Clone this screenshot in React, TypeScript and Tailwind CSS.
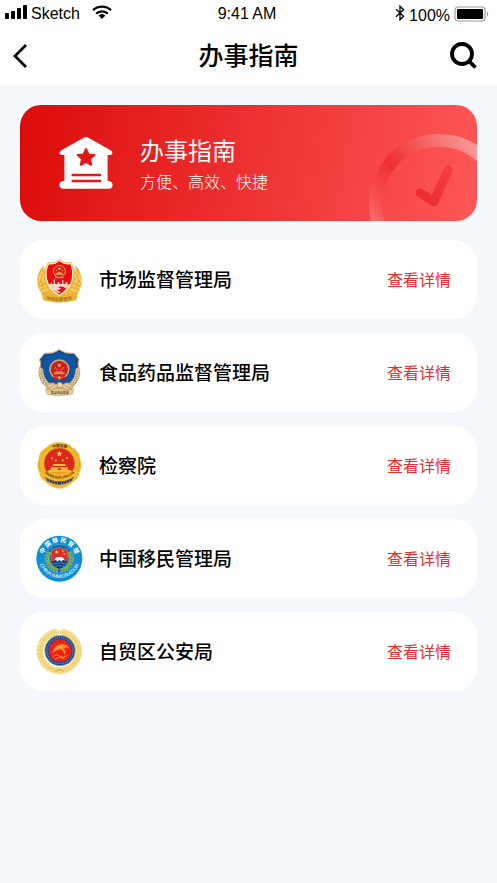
import type { ReactNode } from "react";

const STAR =
  "M0 -10 L2.9 -3.5 L9.8 -3 L4.6 1.7 L6.2 8.6 L0 5 L-6.2 8.6 L-4.6 1.7 L-9.8 -3 L-2.9 -3.5 Z";

function Star({ x, y, s, fill }: { x: number; y: number; s: number; fill: string }) {
  return <path d={STAR} fill={fill} transform={`translate(${x} ${y}) scale(${s})`} />;
}

type WreathProps = {
  cx: number;
  cy: number;
  r: number;
  from: number;
  to: number;
  count: number;
  rx: number;
  ry: number;
  fill: string;
  stroke: string;
};

/* Mirrored leaves on both sides of a circle; angles in degrees, 0 at the bottom. */
function Wreath({ cx, cy, r, from, to, count, rx, ry, fill, stroke }: WreathProps) {
  const leaves: ReactNode[] = [];
  for (let i = 0; i < count; i++) {
    const deg = from + ((to - from) * i) / (count - 1);
    const a = (deg * Math.PI) / 180;
    for (const side of [-1, 1]) {
      for (const tilt of [-28, 28]) {
        const rr = r + (tilt > 0 ? ry : -ry);
        const x = cx + side * Math.sin(a) * rr;
        const y = cy + Math.cos(a) * rr;
        leaves.push(
          <ellipse
            key={`${i}${side}${tilt}`}
            rx={rx}
            ry={ry}
            fill={fill}
            stroke={stroke}
            strokeWidth="1"
            transform={`translate(${x} ${y}) rotate(${-side * (deg + tilt)})`}
          />,
        );
      }
    }
  }
  return <g>{leaves}</g>;
}

function NationalCrest({ x, y, r }: { x: number; y: number; r: number }) {
  const k = r / 24;
  return (
    <g transform={`translate(${x} ${y}) scale(${k})`}>
      <circle r="25" fill="#c9201f" stroke="#dba878" strokeWidth="4" />
      <Star x={0} y={-11} s={0.6} fill="#f0b860" />
      <Star x={-11} y={-4} s={0.25} fill="#f0b860" />
      <Star x={11} y={-4} s={0.25} fill="#f0b860" />
      <Star x={-6} y={0} s={0.25} fill="#f0b860" />
      <Star x={6} y={0} s={0.25} fill="#f0b860" />
      <path d="M-14 13 V8 H-9 V5 H9 V8 H14 V13 Z" fill="#de8a4c" />
      <path d="M-16 18 L-8 23 H8 L16 18 L14 30 L4 27 H-4 L-14 30 Z" fill="#c81a1c" />
      <circle cy="22" r="4" fill="#e0a460" />
    </g>
  );
}

function MarketEmblem() {
  return (
    <svg viewBox="18 18 144 144" className="size-12 shrink-0" aria-hidden="true">
      <path d="M42 48 C18 62 16 108 34 128 L40 146 Q88 168 138 146 L144 128 C160 108 158 62 136 48 L122 110 L88 136 L56 110 Z" fill="#f0b73a" />
      <g stroke="#fbe08a" strokeWidth="3" strokeLinecap="round" fill="none">
        <path d="M42 54 L34 72 M36 66 L28 84 M33 80 L25 94 M44 72 L36 92 M44 92 L28 104 M48 108 L31 114 M54 118 L36 124" />
        <path d="M136 54 L144 72 M142 66 L150 84 M145 80 L153 94 M134 72 L142 92 M134 92 L150 104 M130 108 L147 114 M124 118 L142 124" />
      </g>
      <g stroke="#d6902a" strokeWidth="1" fill="none">
        <path d="M38 56 L32 84 L40 116 M24 86 L38 100 M25 102 L42 116" />
        <path d="M140 56 L146 84 L138 116 M154 86 L140 100 M153 102 L136 116" />
      </g>
      <path d="M88 29 Q104 42 124 38 Q134 58 130 88 Q124 120 88 140 Q52 120 46 88 Q42 58 54 38 Q74 42 88 29 Z" fill="#fff3c0" stroke="#d8a23b" strokeWidth="2" />
      <path d="M88 34 Q104 46 121 43 Q129 60 125 86 Q120 112 88 134 Q56 112 51 86 Q47 60 57 43 Q74 46 88 34 Z" fill="#ed0a10" />
      <circle cx="88" cy="64" r="18" fill="#e31a18" stroke="#ec9c5f" strokeWidth="3" />
      <Star x={88} y={56} s={0.5} fill="#fbd66e" />
      <Star x={79} y={62} s={0.25} fill="#fbd66e" />
      <Star x={97} y={62} s={0.25} fill="#fbd66e" />
      <path d="M76 74 V70 H82 V67 H94 V70 H100 V74 Z M76 80 Q88 87 100 80 V85 H76 Z" fill="#efa963" />
      <path d="M57 104 L62 101 V98 H66 V102 H71 V90 L73 86 L75 90 V102 H83 V96 H88 V102 H96 V91 H100 V102 H106 V97 H112 V102 L118 104 L108 116 Q98 106 84 112 L94 117 L80 120 L92 126 L88 130 Q66 120 57 104 Z" fill="#fbd9c8" />
      <path d="M36 126 Q88 152 142 126 L138 150 Q88 164 40 150 Z" fill="#eeb233" stroke="#d39a2b" strokeWidth="1" />
      <path id="marketBanner" d="M43 147 Q88 159 137 146" fill="none" />
      <text fontSize="13" fill="#855b13" className="font-['Noto_Sans_CJK_SC',sans-serif]">
        <textPath href="#marketBanner" startOffset="5">市场监督管理</textPath>
      </text>
    </svg>
  );
}

function FoodDrugEmblem() {
  return (
    <svg viewBox="18 18 144 144" className="size-12 shrink-0" aria-hidden="true">
      <path d="M88 20 Q108 34 132 31 L147 49 Q141 62 147 76 Q155 108 126 132 L88 150 L50 132 Q21 108 29 76 Q35 62 29 49 L44 31 Q68 34 88 20 Z" fill="#11549f" stroke="#cda86d" strokeWidth="3" />
      <path d="M88 26 Q108 38 130 36 L141 50 Q135 62 140 76 Q147 104 122 126 L88 142 L54 126 Q29 104 36 76 Q41 62 35 50 L46 36 Q68 38 88 26 Z" fill="none" stroke="#0b4384" strokeWidth="2" />
      <NationalCrest x={88} y={79} r={27} />
      <Wreath cx={88} cy={82} r={55} from={34} to={92} count={8} rx={7} ry={3} fill="#e8d3a8" stroke="#9c7b48" />
      <path d="M46 128 Q66 112 78 124 L88 116 L100 124 Q112 112 132 128 L124 144 H52 Z" fill="#cfae78" />
      <path d="M54 130 L70 124 M62 137 L80 128 M122 130 L106 124 M114 137 L98 128" stroke="#f5e6c5" strokeWidth="3" />
      <circle cx="90" cy="126" r="7" fill="#f2dfba" stroke="#a97f45" />
      <path d="M46 138 L56 141 Q88 133 120 141 L132 138 L128 153 L119 155 Q88 162 58 155 L50 153 Z" fill="#e3cba0" stroke="#a98450" strokeWidth="1" />
      <text x="89" y="152" fontSize="9" textAnchor="middle" fill="#5e411d" className="font-['Noto_Sans_CJK_SC',sans-serif] font-bold">食品药品监督</text>
    </svg>
  );
}

function ProcuratorateEmblem() {
  return (
    <svg viewBox="18 18 144 144" className="size-12 shrink-0" aria-hidden="true">
      <path d="M88 19 Q112 18 126 34 Q148 44 150 68 Q158 92 148 110 Q146 128 130 136 Q114 156 88 158 Q62 156 46 136 Q30 128 28 110 Q18 92 26 68 Q28 44 50 34 Q64 18 88 19 Z" fill="#f2b92c" />
      <path d="M30 68 Q24 92 34 108 M146 68 Q152 92 142 108 M36 62 Q46 38 66 30 M140 62 Q130 38 110 30" stroke="#d89a22" strokeWidth="2" fill="none" />
      <circle cx="88" cy="82" r="46" fill="#dc2620" stroke="#d9901e" strokeWidth="2" />
      <Star x={88} y={53} s={0.9} fill="#fbd23c" />
      <Star x={66} y={66} s={0.4} fill="#fbd23c" />
      <Star x={78} y={73} s={0.4} fill="#fbd23c" />
      <Star x={98} y={73} s={0.4} fill="#fbd23c" />
      <Star x={111} y={66} s={0.4} fill="#fbd23c" />
      <path d="M66 90 L72 84 H104 L110 90 Z M62 102 V94 H114 V102 Z M50 110 L56 102 H122 L128 110 Z" fill="#f5bc32" />
      <path d="M74 91 H102 V93 H74 Z M84 97 H92 V102 H84 Z" fill="#bb2a19" />
      <path d="M48 106 Q88 118 129 106 Q116 128 88 128 Q60 128 48 106 Z" fill="#f0b12b" />
      <path d="M44 122 Q88 150 132 122 L124 136 Q88 156 52 136 Z" fill="#29307e" />
      <path d="M50 124 V142 M58 126 V144 M66 129 V148 M74 131 V150 M82 132 V152 M94 132 V152 M102 131 V150 M110 129 V148 M118 126 V144 M126 124 V142" stroke="#e0a93a" strokeWidth="2" />
      <path id="procTop" d="M57 40 Q88 26 121 40" fill="none" />
      <path id="procBottom" d="M32 94 Q48 126 88 127 Q128 126 146 94" fill="none" />
      <g fill="#44320c" className="font-['Noto_Sans_CJK_SC',sans-serif] font-bold">
        <text fontSize="11">
          <textPath href="#procTop" startOffset="50%" textAnchor="middle">中国检察</textPath>
        </text>
        <text fontSize="9">
          <textPath href="#procBottom" startOffset="50%" textAnchor="middle">ZHONG GUO JIAN CHA</textPath>
        </text>
      </g>
    </svg>
  );
}

function ImmigrationEmblem() {
  return (
    <svg viewBox="18 18 144 144" className="size-12 shrink-0" aria-hidden="true">
      <circle cx="88" cy="89" r="69" fill="#0f8ed4" />
      <circle cx="88" cy="89" r="43" fill="#1565ad" stroke="#51b8e8" strokeWidth="2" />
      <Wreath cx={88} cy={89} r={35} from={12} to={118} count={9} rx={4} ry={3} fill="#5bab4b" stroke="#d4c84d" />
      <path d="M64 60 Q76 63 88 55 Q100 63 112 60 V88 Q112 108 88 120 Q64 108 64 88 Z" fill="#e12b2a" stroke="#f4cf7a" strokeWidth="1" />
      <Star x={80} y={69} s={0.6} fill="#ffe051" />
      <Star x={98} y={66} s={0.35} fill="#ffe051" />
      <Star x={103} y={75} s={0.35} fill="#ffe051" />
      <path d="M64 100 L80 85 H97 L112 100 Q106 114 88 120 Q70 114 64 100 Z" fill="#153d7a" />
      <path d="M70 95 L80 84 H97 L106 95 L98 92 L94 98 L88 92 L82 98 L78 92 Z" fill="#ffffff" />
      <path d="M66 105 Q88 98 110 105 M72 112 Q88 107 104 112" stroke="#4cb2e5" strokeWidth="2" fill="none" />
      <path id="immTop" d="M40 98 A49 49 0 1 1 136 98" fill="none" />
      <path id="immBottom" d="M27 96 A62 62 0 0 0 149 96" fill="none" />
      <g fill="#ffffff">
        <text fontSize="18" className="font-['Noto_Sans_CJK_SC',sans-serif] font-bold">
          <textPath href="#immTop" startOffset="50%" textAnchor="middle">中 国 移 民 管 理</textPath>
        </text>
        <text fontSize="15" className="font-['Liberation_Sans',sans-serif]">
          <textPath href="#immBottom" startOffset="50%" textAnchor="middle">CHINA IMMIGRATION</textPath>
        </text>
      </g>
    </svg>
  );
}

function FreeTradeEmblem() {
  return (
    <svg viewBox="18 18 144 144" className="size-12 shrink-0" aria-hidden="true">
      <Wreath cx={88} cy={88} r={58} from={6} to={170} count={17} rx={9} ry={4} fill="#fae08a" stroke="#e2b84e" />
      <circle cx="90" cy="86" r="46" fill="#164a95" stroke="#f1cf71" strokeWidth="2" />
      <circle cx="90" cy="86" r="39" fill="none" stroke="#6f90b8" strokeWidth="4" strokeDasharray="3 3" />
      <circle cx="90" cy="86" r="34" fill="#ee2019" />
      <path d="M66 94 Q72 68 96 66 Q112 66 116 78 Q108 74 102 80 Q110 88 104 98 Q100 86 92 82 Q78 84 66 94 Z" fill="#f58a2c" />
      <path d="M72 88 Q80 74 98 72" stroke="#ffd65e" strokeWidth="2" fill="none" />
      <path d="M68 104 Q80 94 90 103 Q100 110 112 100 M74 111 Q88 102 104 110" stroke="#f58f33" strokeWidth="3" fill="none" />
      <path d="M72 146 Q88 136 104 146 L98 150 Q88 144 78 150 Z" fill="#e9bb4e" />
    </svg>
  );
}

const departments = [
  { name: "市场监督管理局", emblem: <MarketEmblem /> },
  { name: "食品药品监督管理局", emblem: <FoodDrugEmblem /> },
  { name: "检察院", emblem: <ProcuratorateEmblem /> },
  { name: "中国移民管理局", emblem: <ImmigrationEmblem /> },
  { name: "自贸区公安局", emblem: <FreeTradeEmblem /> },
];

function StatusBar() {
  return (
    <div className="grid h-[26px] grid-cols-[1fr_auto_1fr] items-center pr-2 pl-[5px] font-['Liberation_Sans',Arial,sans-serif] text-base leading-6">
      <div className="flex items-center">
        <svg width="22" height="14" viewBox="0 0 22 14" className="-mt-1" aria-hidden="true">
          <rect x="0" y="8" width="4" height="6" rx="1" />
          <rect x="6" y="6" width="4" height="8" rx="1" />
          <rect x="12" y="3" width="4" height="11" rx="1" />
          <rect x="18" y="0" width="4" height="14" rx="1" />
        </svg>
        <span className="ml-1">Sketch</span>
        <svg width="20" height="14" viewBox="0 0 20 14" className="-mt-1 ml-3" aria-hidden="true">
          <g fill="none" stroke="#000" strokeWidth="2.3">
            <path d="M1 5.2 A13 13 0 0 1 19 5.2" />
            <path d="M4.2 8.6 A8.4 8.4 0 0 1 15.8 8.6" />
          </g>
          <path d="M6.6 10.6 A5 5 0 0 1 13.4 10.6 L10 14 Z" />
        </svg>
      </div>
      <span>9:41 AM</span>
      <div className="flex items-center justify-end">
        <svg width="10" height="16" viewBox="0 0 10 16" className="-mt-0.5 mr-1" aria-hidden="true">
          <path d="M1 4.3 L8.6 11.3 L5 14.8 V1.2 L8.6 4.7 L1 11.7" fill="none" stroke="#000" strokeWidth="1.3" />
        </svg>
        <span className="pt-1">100%</span>
        <svg width="35" height="16" viewBox="0 0 35 16" className="ml-1" aria-hidden="true">
          <rect x="1" y="1" width="30" height="14" rx="3" fill="#fff" stroke="#9b9b9b" strokeWidth="1.2" />
          <rect x="3" y="3" width="26" height="10" rx="1" />
          <path d="M33 5.5 Q35.5 8 33 10.5 Z" fill="#9b9b9b" />
        </svg>
      </div>
    </div>
  );
}

function ServiceHallIcon() {
  return (
    <svg width="54" height="54" viewBox="0 0 54 54" className="shrink-0" aria-hidden="true">
      <path
        d="M25 1.6 Q27 0.4 29 1.6 L52 14.6 Q53.6 16 53.4 17.6 Q53 19 51.2 19 H48.6 V45 H50 Q53.6 45.4 53.6 49 Q53.4 52.6 50 52.8 H4 Q0.6 52.6 0.4 49 Q0.4 45.4 4 45 H5.4 V19 H2.8 Q1 19 0.6 17.6 Q0.4 16 2 14.6 Z"
        fill="#fff"
      />
      <path d={STAR} transform="translate(27 21.5) scale(0.84)" fill="#e11919" stroke="#e11919" strokeWidth="2.6" strokeLinejoin="round" />
      <path d="M13.6 39 H41 M13.6 45 H41" stroke="#e11919" strokeWidth="2.4" strokeLinecap="round" />
    </svg>
  );
}

function ClockArt() {
  return (
    <svg width="108" height="116" viewBox="369 105 108 116" className="absolute right-0 bottom-0" aria-hidden="true">
      <defs>
        <linearGradient id="ring" gradientUnits="userSpaceOnUse" x1="370" y1="225" x2="480" y2="150">
          <stop offset="0" stopColor="#fb7575" />
          <stop offset="0.15" stopColor="#f65050" />
          <stop offset="0.38" stopColor="#ef2f2f" />
          <stop offset="0.7" stopColor="#f66464" />
          <stop offset="1" stopColor="#f99c9c" />
        </linearGradient>
        <linearGradient id="hand" gradientUnits="userSpaceOnUse" x1="434" y1="202" x2="448" y2="170">
          <stop offset="0" stopColor="#ee3032" />
          <stop offset="1" stopColor="#f53c3d" />
        </linearGradient>
      </defs>
      <circle cx="439" cy="204" r="63.5" fill="none" stroke="url(#ring)" strokeWidth="13" />
      <path d="M434 201.500 L448 170" stroke="url(#hand)" strokeWidth="9" strokeLinecap="round" />
      <path d="M420 193 L434 201.500" stroke="#ed2f31" strokeWidth="9" strokeLinecap="round" />
    </svg>
  );
}

export default function App() {
  return (
    <div className="min-h-screen bg-[#f4f8fc] font-['Noto_Sans_CJK_SC',sans-serif] text-black">
      <header className="bg-white">
        <StatusBar />
        <nav className="grid h-[59px] grid-cols-[1fr_auto_1fr] items-center px-5">
          <button type="button" aria-label="返回" className="-ml-2 justify-self-start">
            <svg width="16" height="26" viewBox="0 0 16 26" fill="none" stroke="#000" strokeWidth="2.8" aria-hidden="true">
              <path d="M14 2 L3 13 L14 24" />
            </svg>
          </button>
          <h1 className="pb-1 text-[25px] leading-8 font-medium">办事指南</h1>
          <button type="button" aria-label="搜索" className="justify-self-end">
            <svg width="27" height="27" viewBox="0 0 27 27" fill="none" stroke="#000" strokeWidth="3.8" aria-hidden="true">
              <circle cx="12" cy="12" r="10" />
              <path d="M18.500 18.500 L25.500 25.500" />
            </svg>
          </button>
        </nav>
      </header>

      <main className="p-5">
        <section className="relative flex h-[116px] items-center gap-[27px] overflow-hidden rounded-[21px] bg-[linear-gradient(100deg,#dc0b0b,#ff5757)] pl-[39px] text-white">
          <ServiceHallIcon />
          <div className="pt-1">
            <h2 className="text-2xl leading-8">办事指南</h2>
            <p className="text-base leading-[30px] font-light">方便、高效、快捷</p>
          </div>
          <ClockArt />
        </section>

        <ul className="mt-[19px] flex flex-col gap-[14px]">
          {departments.map(({ name, emblem }) => (
            <li key={name} className="flex h-[79px] items-center gap-[15px] rounded-3xl bg-white pr-[26px] pl-4">
              {emblem}
              <h3 className="grow pb-0.5 text-[19px] leading-7 font-medium">{name}</h3>
              <a href="#" aria-label={`查看详情 ${name}`} className="pb-0.5 text-base leading-6 text-[#e23030]">
                查看详情
              </a>
            </li>
          ))}
        </ul>
      </main>
    </div>
  );
}
